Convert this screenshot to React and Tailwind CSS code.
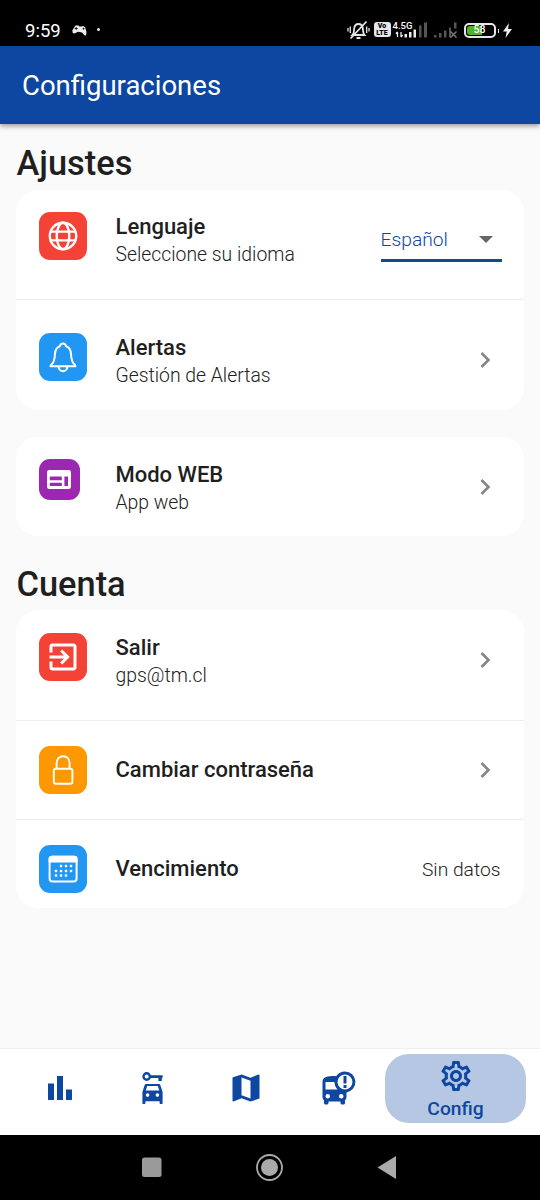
import { MdBusAlert, MdExitToApp, MdMap, MdOutlineSettings } from "react-icons/md";

const GlobeIcon = () => (
  <svg className="h-[30px] w-[30px]" viewBox="0 0 30 30" fill="none" stroke="#fff" strokeWidth="2.4">
    <circle cx="15" cy="15" r="13.2" />
    <ellipse cx="15" cy="15" rx="6.3" ry="13.2" />
    <path d="M3 10.600h24M3 19.400h24" strokeWidth="2.200" />
  </svg>
);

const BellIcon = () => (
  <svg className="h-8 w-8" viewBox="0 0 32 32" fill="none" stroke="#fff" strokeWidth="2" strokeLinejoin="round">
    <path d="M3.500 25.300c0-1 .5-1.700 1.800-2.800 2-1.800 2.300-4 2.700-9.500C8.300 8 10 6.200 12.800 5.300c.5-1.500 1.500-2.800 3.200-2.800s2.700 1.300 3.200 2.800c2.800.9 4.500 2.700 4.800 7.700.4 5.500.7 7.700 2.700 9.500 1.300 1.100 1.800 1.800 1.800 2.800z" />
    <path d="M11.600 25.500a4.400 4.700 0 0 0 8.800 0" />
  </svg>
);

const WebIcon = () => (
  <svg className="h-[19px] w-6" viewBox="0 0 24 19">
    <path
      fill="#fff"
      fillRule="evenodd"
      d="M2.300 0h19.400A2.300 2.300 0 0 1 24 2.300v14.400a2.300 2.300 0 0 1-2.300 2.300H2.300A2.300 2.300 0 0 1 0 16.700V2.300A2.300 2.300 0 0 1 2.300 0zM2.800 6.600v3.600h12V6.600zM2.800 12.800v3.200h12v-3.200zM17.400 6.600V16h3.600V6.600z"
    />
  </svg>
);

const LockIcon = () => (
  <svg className="h-8 w-8" viewBox="0 0 32 32" fill="none" stroke="#fff" strokeWidth="1.900">
    <rect x="6.800" y="14.800" width="18.600" height="15" rx="2" />
    <path d="M9.600 14.800V9.500c0-4.500 2.800-7.300 6.500-7.300s6.500 2.800 6.500 7.300v5.300" />
  </svg>
);

const dots = [
  [13, 12], [18, 12], [23, 12],
  [8, 17], [13, 17], [18, 17], [23, 17],
  [8, 21.5], [13, 21.5], [18, 21.5],
];

const CalendarIcon = () => (
  <svg className="h-[30px] w-[30px]" viewBox="0 0 30 30">
    <rect x="1.600" y="2.800" width="27" height="24.800" rx="3" fill="none" stroke="#fff" strokeWidth="2" />
    <path d="M.6 8.600V5a3.300 3.300 0 0 1 3.300-3.300h22.400A3.300 3.300 0 0 1 29.600 5v3.600z" fill="#fff" />
    {dots.map(([x, y]) => (
      <rect key={`${x}-${y}`} x={x - 1.2} y={y - 1.2} width="2.4" height="2.4" fill="#fff" />
    ))}
  </svg>
);

const BarsIcon = () => (
  <svg className="h-6 w-6" viewBox="0 0 24 24" fill="currentColor">
    <path d="M0 7.500h6V24H0zM9 0h6v24H9zM18 13.500h6V24h-6z" />
  </svg>
);

const CarKeyIcon = () => (
  <svg className="h-8 w-[21px]" viewBox="0 0 21 32" fill="currentColor">
    <circle cx="4.700" cy="4.500" r="3.200" fill="none" stroke="currentColor" strokeWidth="2.400" />
    <path d="M8 3.200h12.600v2.700h-.8V9h-3.400V5.900H8z" />
    <path
      fillRule="evenodd"
      d="M4.400 12h12.200c.9 0 1.500.5 1.800 1.200L20.600 20v11c0 .6-.4 1-1 1h-1c-.6 0-1-.4-1-1v-1.800H3.400V31c0 .6-.4 1-1 1h-1c-.6 0-1-.4-1-1V20l2.200-6.800c.3-.7.900-1.200 1.800-1.200zM5.200 14l-1.500 4.600h13.600L15.800 14zM5.600 21.300a1.800 1.800 0 1 0 0 3.600 1.800 1.800 0 0 0 0-3.600zM15.400 21.300a1.800 1.800 0 1 0 0 3.600 1.800 1.800 0 0 0 0-3.600z"
    />
  </svg>
);

const Chevron = () => (
  <svg className="h-[18px] w-3" viewBox="0 0 12 18" fill="none" stroke="#858585" strokeWidth="2.600">
    <path d="M1.500 2l7 7-7 7" />
  </svg>
);

const StatusBar = () => (
  <div className="flex h-[46px] shrink-0 items-end bg-black pb-1.5 pl-[25px] pr-[28px] text-white">
    <span className="mb-[-1px] text-[18.5px] leading-[20px]">9:59</span>
    <svg className="mb-1 ml-[11px] h-[11px] w-[15px]" viewBox="0 0 15 11">
      <path
        d="M3.500.4h3l1 1h2l1.500-.4 2 1 1.500 5-.5 3.400-1.700-.2L10 7.500 6 6.800 2.500 8.600.8 8 .3 5.500z"
        fill="#eee"
      />
      <path d="M4.200 2v3M2.700 3.500h3M10.500 3.700h2M11.500 2.700v2" stroke="#000" strokeWidth=".8" />
    </svg>
    <span className="mb-[9px] ml-2.5 h-[3px] w-[3px] rounded-full bg-gray-200" />
    <div className="ml-auto flex items-end">
      <svg className="h-5 w-[23px]" viewBox="0 0 23 20" fill="none" stroke="#e5e5e5" strokeWidth="1.800">
        <path d="M5.500 15c1.700-1.700 1.300-3 1.600-6C7.400 5.500 9 4 11.500 4s4.100 1.500 4.400 5c.3 3 0 4.300 1.600 6zM9.500 18h4M3.500 18.500L19.500 1.500" />
        <path d="M3.300 6.500v6.500M1 8v3.500M19.700 6.500v6.500M22 8v3.500" strokeWidth="1.300" />
      </svg>
      <span className="mb-[3px] ml-1 flex h-[15px] w-[17px] flex-col items-center justify-center rounded-[3px] bg-gray-200 text-[7px] font-black leading-[6.5px] text-black">
        <span>Vo</span>
        <span>LTE</span>
      </span>
      <div className="relative ml-[3px] h-[18px] w-9">
        <span className="absolute left-[-1px] top-[-1px] text-[9.5px] font-medium leading-[10px]">4.5G</span>
        <svg className="h-[18px] w-9" viewBox="0 0 36 18">
          <path d="M3.500 10v5M1.800 11.700l1.700-1.700M7 10v5M7 15l1.700-1.700" stroke="#eee" strokeWidth="1.300" />
          <path d="M10.500 12H13v3.500h-2.500zM15 10h2.500v5.500H15zM19.500 7.500H22v8h-2.500z" fill="#eee" />
          <path d="M25 3.500h2.500v12H25zM30 .5h3v15h-3z" fill="#555" />
        </svg>
      </div>
      <svg className="ml-[3px] h-[18px] w-[26px]" viewBox="0 0 26 18" fill="#555">
        <path d="M1 13h2.500v2.500H1zM6 11h2.500v4.500H6zM11 8.500h2.500v7H11zM16 5.500h2v10h-2zM21 .5h2.500v6H21z" />
        <path d="M17.500 9.500l6 6M23.500 9.500l-6 6" stroke="#777" strokeWidth="1.500" />
      </svg>
      <div className="mb-0.5 ml-[5px] flex items-center">
        <div className="flex h-[15px] w-[32px] items-center rounded-[5px] border-2 border-gray-200 p-px">
          <div className="flex h-full w-full items-center justify-center rounded-[3px] bg-[linear-gradient(90deg,#50b424_58%,#000_58%)] text-[10.5px] font-medium leading-none">
            58
          </div>
        </div>
        <span className="ml-0.5 h-1 w-[1.5px] bg-gray-200" />
      </div>
      <svg className="mb-0.5 ml-1 h-[15px] w-[9px]" viewBox="0 0 9 15" fill="#eee">
        <path d="M6 0L0 8.500h3.700L2.500 15 9 6H5z" />
      </svg>
    </div>
  </div>
);

const Badge = ({ className, children }) => (
  <div className={`flex shrink-0 items-center justify-center text-white ${className}`}>
    {children}
  </div>
);

const Label = ({ title, subtitle, className }) => (
  <div className={`flex-1 ${className}`}>
    <p className="text-[22px] font-medium leading-7 text-[#1f1f1f]">{title}</p>
    {subtitle && (
      <p className="text-[19.35px] font-light leading-7 text-[#222]">{subtitle}</p>
    )}
  </div>
);

const Row = ({ className, children }) => (
  <div className={`flex items-start pl-[22.5px] ${className}`}>{children}</div>
);

const Language = () => (
  <div className="mr-[22.5px] mt-[13px] flex h-[37px] w-[121px] items-center justify-between border-b-[3px] border-[#17478f] pb-1 pr-[9px]">
    <span className="text-[19.25px] font-light leading-7 text-[#0d47a1]">Español</span>
    <svg className="h-[7px] w-[14px]" viewBox="0 0 14 7" fill="#666">
      <path d="M0 0h14L7 7z" />
    </svg>
  </div>
);

const BottomNav = () => (
  <nav className="flex h-[87px] shrink-0 items-start border-t border-[#efefef] bg-white text-[#0d47a1]">
    <div className="flex h-[77px] flex-1 items-center pl-[13px]">
      <div className="flex w-[93px] justify-center">
        <BarsIcon />
      </div>
      <div className="flex w-[93px] justify-center">
        <CarKeyIcon />
      </div>
      <div className="flex w-[93px] justify-center">
        <MdMap size={36} />
      </div>
      <div className="flex w-[93px] justify-center">
        <MdBusAlert size={36} />
      </div>
    </div>
    <div className="mr-3.5 mt-[5px] flex h-[69px] w-[141px] flex-col items-center rounded-[24px] bg-[#b6c7e3] pt-1">
      <MdOutlineSettings size={36} />
      <span className="pt-px text-[19.25px] font-medium leading-7">Config</span>
    </div>
  </nav>
);

const SystemNav = () => (
  <div className="flex h-[65px] shrink-0 items-center justify-center bg-black">
    <svg className="h-[30px] w-[260px]" viewBox="0 0 260 30">
      <rect x="2" y="4.500" width="19.500" height="19.500" rx="2.500" fill="#9a9a9a" />
      <circle cx="129.500" cy="14.500" r="12.500" fill="none" stroke="#aaa" strokeWidth="1.800" />
      <circle cx="129.500" cy="14.500" r="8.500" fill="#aaa" />
      <path d="M237.500 14.500l18.500-11.500v23z" fill="#aaa" />
    </svg>
  </div>
);

export default function App() {
  return (
    <div className="flex h-[1200px] w-[540px] flex-col overflow-hidden bg-[#fafafa] font-['Roboto',sans-serif]">
      <StatusBar />
      <header className="z-10 flex h-[77.5px] shrink-0 items-center bg-[#0d47a1] pl-[22px] pt-[3px] shadow-[0_2px_5px_rgba(0,0,0,0.4)]">
        <h1 className="text-[27.5px] leading-8 text-white">Configuraciones</h1>
      </header>
      <main className="flex-1 px-4 pt-[19.5px]">
        <h2 className="pl-[0.5px] text-[34.4px] font-medium leading-[40px] text-[#1f1f1f]">Ajustes</h2>
        <section className="mt-[7px] overflow-hidden rounded-[22px] bg-white">
          <Row className="h-[110px] border-b border-[#eee] pt-[21.5px]">
            <Badge className="mr-[29px] h-12 w-12 rounded-[11px] bg-[#f44336]">
              <GlobeIcon />
            </Badge>
            <Label title="Lenguaje" subtitle="Seleccione su idioma" className="pt-px" />
            <Language />
          </Row>
          <Row className="h-[110px] pt-[32.5px]">
            <Badge className="mr-[29px] h-12 w-12 rounded-[11px] bg-[#2196f3]">
              <BellIcon />
            </Badge>
            <Label title="Alertas" subtitle="Gestión de Alertas" className="pt-px" />
            <div className="mr-8 mt-[18.5px]">
              <Chevron />
            </div>
          </Row>
        </section>
        <section className="mt-[27px] rounded-[22px] bg-white">
          <Row className="h-[99px] pt-[22px]">
            <Badge className="mr-9 h-[41px] w-[41px] rounded-[11px] bg-[#9c27b0]">
              <WebIcon />
            </Badge>
            <Label title="Modo WEB" subtitle="App web" className="pt-[1.5px]" />
            <div className="mr-8 mt-[18.5px]">
              <Chevron />
            </div>
          </Row>
        </section>
        <h2 className="mt-[27.5px] pl-[0.5px] text-[34.4px] font-medium leading-[40px] text-[#1f1f1f]">Cuenta</h2>
        <section className="mt-[6.5px] overflow-hidden rounded-[22px] bg-white">
          <Row className="h-[111px] border-b border-[#eee] pt-[22.5px]">
            <Badge className="mr-[29px] h-12 w-12 rounded-[11px] bg-[#f44336]">
              <MdExitToApp size={36} />
            </Badge>
            <Label title="Salir" subtitle="gps@tm.cl" className="pt-px" />
            <div className="mr-8 mt-[18.5px]">
              <Chevron />
            </div>
          </Row>
          <Row className="h-[99px] border-b border-[#eee] pt-[25px]">
            <Badge className="mr-[29px] h-12 w-12 rounded-[11px] bg-[#ff9800]">
              <LockIcon />
            </Badge>
            <Label title="Cambiar contraseña" className="pt-2.5" />
            <div className="mr-8 mt-[15px]">
              <Chevron />
            </div>
          </Row>
          <Row className="h-[88px] pt-[25px]">
            <Badge className="mr-[29px] h-12 w-12 rounded-[11px] bg-[#2196f3]">
              <CalendarIcon />
            </Badge>
            <Label title="Vencimiento" className="pt-2.5" />
            <span className="mr-[23.5px] mt-[11px] text-[19.25px] font-light leading-7 text-[#222]">
              Sin datos
            </span>
          </Row>
        </section>
      </main>
      <BottomNav />
      <SystemNav />
    </div>
  );
}
